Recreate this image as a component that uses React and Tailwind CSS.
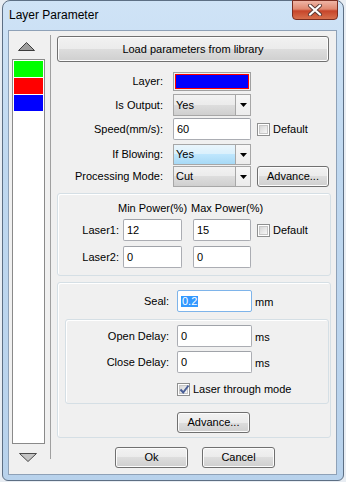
import React from 'react';

const btnCls =
  'flex items-center justify-center rounded-[3px] border border-[#707070] bg-[linear-gradient(#f2f2f2_0%,#ebebeb_50%,#dddddd_50%,#cfcfcf_100%)] shadow-[inset_0_0_0_1px_#fcfcfc] text-black';

function DropArrow() {
  return (
    <svg width="7" height="4" viewBox="0 0 7 4">
      <path d="M0 0h7L3.5 4z" fill="#000" />
    </svg>
  );
}

function Combo({ value, hot }) {
  return (
    <div className="flex h-full w-[78px] border border-[#a7a7a7] bg-white">
      <div
        className={
          hot
            ? 'flex flex-1 items-center pl-[2px] bg-[linear-gradient(#e9f5fc_0%,#d9f0fc_50%,#bee6fd_50%,#a7d9f5_100%)]'
            : 'flex flex-1 items-center pl-[2px] bg-[linear-gradient(#f2f2f2_0%,#ebebeb_50%,#dddddd_50%,#cfcfcf_100%)]'
        }
      >
        {value}
      </div>
      <div className="flex w-[15px] items-center justify-center border-l border-[#a7a7a7] bg-[linear-gradient(#f7f7f7,#ececec)]">
        <DropArrow />
      </div>
    </div>
  );
}

function Field({ value, w, focus }) {
  return (
    <div
      className={
        focus
          ? 'flex h-full items-center rounded-[2px] border border-[#7eb4ea] bg-white pl-[3px]'
          : 'flex h-full items-center rounded-[2px] border border-[#abadb3] border-t-[#a0a3a9] bg-white pl-[3px]'
      }
      style={{ width: w }}
    >
      {focus ? <span className="bg-[#3399ff] text-white px-px">{value}</span> : value}
    </div>
  );
}

function Check({ checked }) {
  return (
    <div className="flex h-[13px] w-[13px] items-center justify-center border border-[#8e8f8f] bg-white">
      <div className="relative h-[9px] w-[9px] border border-[#c6c6c6] bg-[linear-gradient(135deg,#d6d6d6,#f7f7f7)]">
        {checked && (
          <svg className="absolute left-[-1px] top-[-2px]" width="11" height="11" viewBox="0 0 11 11">
            <path d="M1.5 5.5L4.2 8.5L9.5 1.5" fill="none" stroke="#4a5f97" strokeWidth="2" />
          </svg>
        )}
      </div>
    </div>
  );
}

function Row({ label, children, top, h }) {
  return (
    <div className="flex items-center" style={{ marginTop: top, height: h }}>
      <div className="w-[112px] text-right">{label}</div>
      <div className="ml-[10px] flex h-full items-center">{children}</div>
    </div>
  );
}

export default function App() {
  return (
    <div className="h-[482px] w-[346px] bg-[#e8edf3] font-['Liberation_Sans',Arial,sans-serif] text-[11px] leading-none text-black">
      <div className="ml-[2px] flex h-[481px] w-[342px] flex-col rounded-t-[8px] rounded-b-[6px] border border-[#5d6f84] bg-[linear-gradient(180deg,#cfe3f6_0%,#bfd8f0_35%,#b8d2ec_100%)]">
        {/* title bar */}
        <div className="flex h-[29px] items-start justify-between">
          <span className="ml-[6px] mt-[8px] text-[12px] text-black">Layer Parameter</span>
          <div className="mr-[5px] flex h-[20px] w-[46px] -mt-px items-center justify-center rounded-b-[4px] border border-[#7a2d20] bg-[linear-gradient(#efb5a5_0%,#e08870_45%,#c7452a_55%,#d7704d_100%)]">
            <svg width="16" height="12" viewBox="0 0 16 12">
              <path d="M3 1.5L13 10.5M13 1.5L3 10.5" stroke="#5a3a36" strokeWidth="4" strokeLinecap="round" />
              <path d="M3 1.5L13 10.5M13 1.5L3 10.5" stroke="#ffffff" strokeWidth="2.2" strokeLinecap="round" />
            </svg>
          </div>
        </div>

        {/* client area */}
        <div className="ml-[5px] flex h-[445px] w-[329px] border border-[#8ea1b7] bg-[#f0f0f0]">
          {/* layer list */}
          <div className="flex w-[41px] flex-col">
            <svg className="ml-[9px] mt-[11px]" width="17" height="9" viewBox="0 0 17 9">
              <path d="M8.5 0.5L16.5 8.5H0.5z" fill="#9c9c9c" stroke="#3c3c3c" />
            </svg>
            <div className="ml-[3px] mt-[8px] flex h-[385px] w-[33px] flex-col gap-px border border-[#8a8a8a] bg-white px-px pt-px">
              <div className="h-[16px] bg-[#00ff00]" />
              <div className="h-[16px] bg-[#ff0000]" />
              <div className="h-[16px] bg-[#0000ff]" />
            </div>
            <svg className="ml-[10px] mt-[9px]" width="18" height="9" viewBox="0 0 18 9">
              <path d="M0.5 0.5H17.5L9 8.5z" fill="#c4c4c4" stroke="#4a4a4a" />
            </svg>
          </div>
          <div className="mt-[4px] h-[424px] w-px bg-[#a0a0a0]" />

          {/* parameters */}
          <div className="flex flex-1 flex-col">
            <div className={`ml-[6px] mt-[5px] h-[26px] w-[272px] ${btnCls}`}>Load parameters from library</div>

            <Row label="Layer:" top={10} h={19}>
              <div className="h-full w-[78px] border border-[#a0a0a0] p-px">
                <div className="h-full w-full border border-[#ff0000] bg-[#0000ff]" />
              </div>
            </Row>
            <Row label="Is Output:" top={3} h={22}>
              <Combo value="Yes" />
            </Row>
            <Row label="Speed(mm/s):" top={2} h={22}>
              <Field value="60" w={78} />
              <div className="ml-[6px]">
                <Check />
              </div>
              <span className="ml-[3px]">Default</span>
            </Row>
            <Row label="If Blowing:" top={4} h={21}>
              <Combo value="Yes" hot />
            </Row>
            <Row label="Processing Mode:" top={1} h={21}>
              <Combo value="Cut" />
              <div className={`ml-[6px] h-[21px] w-[72px] ${btnCls}`}>Advance...</div>
            </Row>

            {/* power group */}
            <div className="ml-[6px] mt-[6px] flex h-[83px] w-[274px] flex-col rounded-[3px] border border-[#d5dfe5] shadow-[inset_1px_1px_0_#ffffff]">
              <div className="mt-[8px] flex h-[13px] items-center">
                <span className="ml-[60px] w-[73px]">Min Power(%)</span>
                <span>Max Power(%)</span>
              </div>
              <div className="mt-[4px] flex h-[22px] items-center">
                <div className="w-[61px] text-right">Laser1:</div>
                <div className="ml-[4px] h-full">
                  <Field value="12" w={59} />
                </div>
                <div className="ml-[11px] h-full">
                  <Field value="15" w={58} />
                </div>
                <div className="ml-[6px]">
                  <Check />
                </div>
                <span className="ml-[3px]">Default</span>
              </div>
              <div className="mt-[5px] flex h-[22px] items-center">
                <div className="w-[61px] text-right">Laser2:</div>
                <div className="ml-[4px] h-full">
                  <Field value="0" w={59} />
                </div>
                <div className="ml-[11px] h-full">
                  <Field value="0" w={58} />
                </div>
              </div>
            </div>

            {/* seal group */}
            <div className="ml-[6px] mt-[6px] flex h-[156px] w-[274px] flex-col rounded-[3px] border border-[#d5dfe5] shadow-[inset_1px_1px_0_#ffffff]">
              <div className="mt-[7px] flex h-[22px] items-center">
                <div className="w-[111px] text-right">Seal:</div>
                <div className="ml-[8px] h-full">
                  <Field value="0.2" w={75} focus />
                </div>
                <span className="ml-[3px] mt-[3px]">mm</span>
              </div>

              <div className="ml-[7px] mt-[7px] flex h-[85px] w-[264px] flex-col rounded-[3px] border border-[#d5dfe5] shadow-[inset_1px_1px_0_#ffffff]">
                <div className="mt-[5px] flex h-[22px] items-center">
                  <div className="w-[103px] text-right">Open Delay:</div>
                  <div className="ml-[8px] h-full">
                    <Field value="0" w={75} />
                  </div>
                  <span className="ml-[3px] mt-[2px]">ms</span>
                </div>
                <div className="mt-[4px] flex h-[22px] items-center">
                  <div className="w-[103px] text-right">Close Delay:</div>
                  <div className="ml-[8px] h-full">
                    <Field value="0" w={75} />
                  </div>
                  <span className="ml-[3px] mt-[2px]">ms</span>
                </div>
                <div className="mt-[10px] flex h-[13px] items-center">
                  <div className="ml-[111px]">
                    <Check checked />
                  </div>
                  <span className="ml-[3px]">Laser through mode</span>
                </div>
              </div>

              <div className={`ml-[119px] mt-[8px] h-[21px] w-[73px] ${btnCls}`}>Advance...</div>
            </div>

            <div className="mt-[9px] flex h-[21px]">
              <div className={`ml-[64px] w-[73px] ${btnCls}`}>Ok</div>
              <div className={`ml-[14px] w-[73px] ${btnCls}`}>Cancel</div>
            </div>
          </div>
        </div>
      </div>
    </div>
  );
}
